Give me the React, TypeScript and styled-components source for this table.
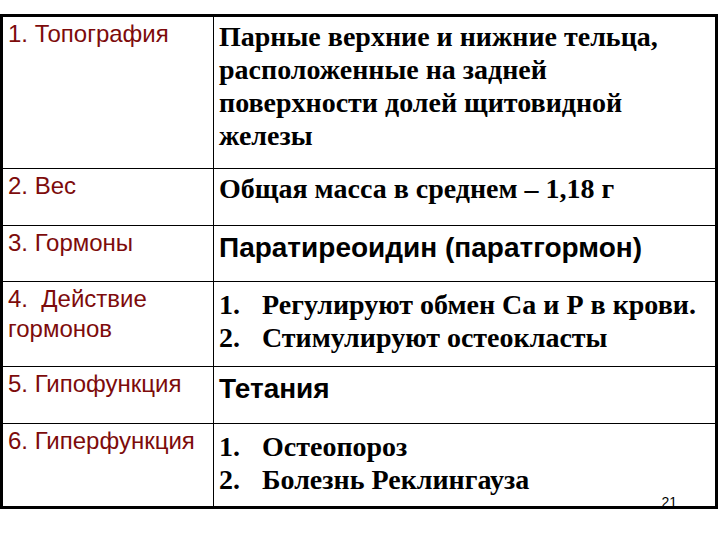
import React from 'react';
import styled, { createGlobalStyle } from 'styled-components';

const GlobalStyle = createGlobalStyle`
  html, body {
    margin: 0;
    padding: 0;
    background: #ffffff;
  }
`;

type Row = {
  label: string;
  height: number;
  kind: 'serif' | 'sans' | 'list';
  lines: string[];
};

const rows: Row[] = [
  {
    label: '1. Топография',
    height: 153,
    kind: 'serif',
    lines: ['Парные верхние и нижние тельца,', 'расположенные на задней', 'поверхности долей щитовидной', 'железы'],
  },
  { label: '2. Вес', height: 57, kind: 'serif', lines: ['Общая масса в среднем – 1,18 г'] },
  { label: '3. Гормоны', height: 56, kind: 'sans', lines: ['Паратиреоидин (паратгормон)'] },
  {
    label: '4.\u00a0 Действие гормонов',
    height: 85,
    kind: 'list',
    lines: ['Регулируют обмен Са и Р в крови.', 'Стимулируют остеокласты'],
  },
  { label: '5. Гипофункция', height: 57, kind: 'sans', lines: ['Тетания'] },
  {
    label: '6. Гиперфункция',
    height: 84,
    kind: 'list',
    lines: ['Остеопороз', 'Болезнь Реклингауза'],
  },
];

function App() {
  return (
    <>
      <GlobalStyle />
      <Page>
        <Table>
          <colgroup>
            <col style={{ width: 212 }} />
            <col />
          </colgroup>
          <tbody>
            {rows.map((r, i) => (
              <tr key={i} style={{ height: r.height }}>
                <LabelCell>{r.label}</LabelCell>
                <ValueCell>
                  {r.kind === 'serif' && (
                    <SerifText>
                      {r.lines.map((l, j) => (
                        <div key={j}>{l}</div>
                      ))}
                    </SerifText>
                  )}
                  {r.kind === 'sans' && <SansText>{r.lines[0]}</SansText>}
                  {r.kind === 'list' && (
                    <List>
                      {r.lines.map((l, j) => (
                        <ListItem key={j}>
                          <Num>{j + 1}.</Num>
                          <span>{l}</span>
                        </ListItem>
                      ))}
                    </List>
                  )}
                  {i === rows.length - 1 && <PageNum>21</PageNum>}
                </ValueCell>
              </tr>
            ))}
          </tbody>
        </Table>
      </Page>
    </>
  );
}

const Page = styled.div`
  width: 720px;
  height: 540px;
  padding-top: 14px;
  box-sizing: border-box;
`;

const Table = styled.table`
  width: 718px;
  border-collapse: collapse;
  border: 3px solid #000;
  table-layout: fixed;
`;

const LabelCell = styled.td`
  border: 1px solid #000;
  vertical-align: top;
  padding: 2px 2px 0 5px;
  font-family: 'Liberation Sans', Arial, sans-serif;
  font-size: 24px;
  line-height: 30px;
  color: #7d0b0b;
`;

const ValueCell = styled.td`
  position: relative;
  border: 1px solid #000;
  vertical-align: top;
  padding: 3px 4px 0 5px;
  color: #000;
`;

const SerifText = styled.div`
  font-family: 'Liberation Serif', 'Times New Roman', serif;
  font-weight: 700;
  font-size: 28px;
  line-height: 33px;
`;

const SansText = styled.div`
  font-family: 'Liberation Sans', Arial, sans-serif;
  font-weight: 700;
  font-size: 28px;
  line-height: 33px;
  padding-top: 2px;
`;

const List = styled.div`
  display: flex;
  flex-direction: column;
  padding-top: 3px;
  font-family: 'Liberation Serif', 'Times New Roman', serif;
  font-weight: 700;
  font-size: 28px;
  line-height: 33px;
`;

const ListItem = styled.div`
  display: grid;
  grid-template-columns: 43px 1fr;
`;

const Num = styled.span``;

const PageNum = styled.span`
  position: absolute;
  right: 38px;
  bottom: -4px;
  font-family: 'Liberation Sans', Arial, sans-serif;
  font-size: 14px;
  color: #000;
`;

export default App;
